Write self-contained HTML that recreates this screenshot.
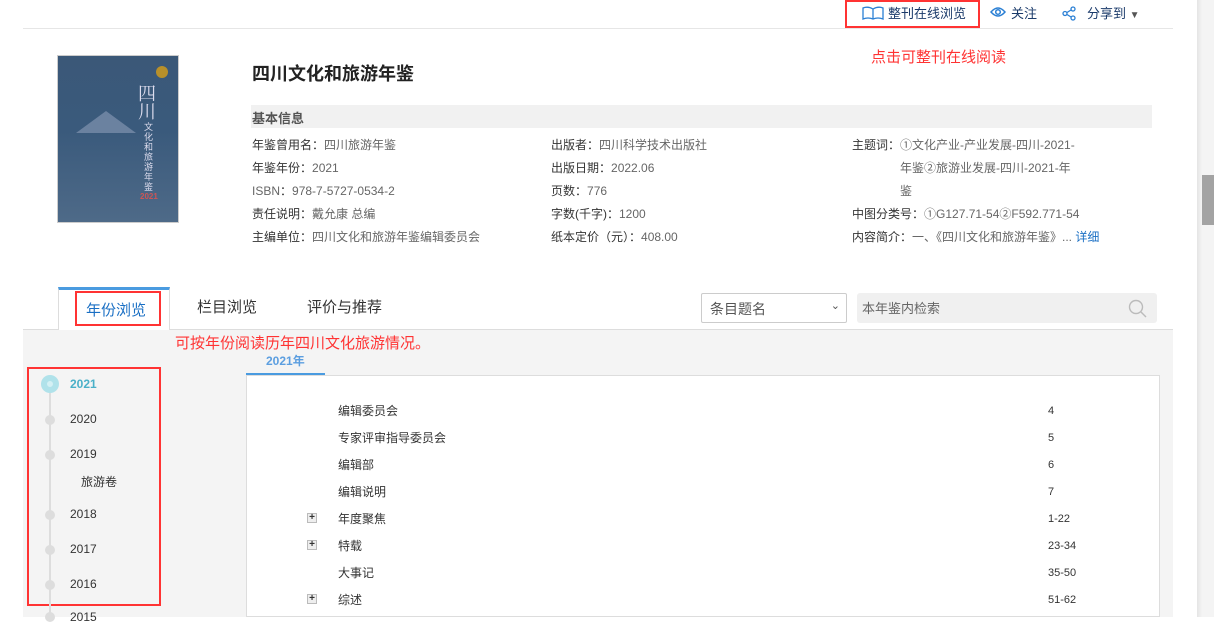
<!DOCTYPE html>
<html><head><meta charset="utf-8"><style>
*{margin:0;padding:0;box-sizing:border-box}
body{width:1214px;height:617px;overflow:hidden;background:#fff;font-family:"Liberation Sans","Noto Sans CJK SC",sans-serif;font-size:12px;color:#333;position:relative}
.a{position:absolute;white-space:nowrap}
.red{color:#f33}
.box{position:absolute;border:2px solid #f33}
.v{color:#666}
</style></head><body>
<div class="a" style="left:23px;top:28px;width:1150px;height:1px;background:#e6e6e6"></div>
<div class="box" style="left:845px;top:0;width:135px;height:28px"></div>
<svg class="a" style="left:862px;top:6px" width="22" height="14" viewBox="0 0 22 14"><path d="M1 2 Q6 0 11 3 Q16 0 21 2 L21 13 Q16 11 11 13 Q6 11 1 13Z M11 3 V13" fill="none" stroke="#2a7fd4" stroke-width="1.3"/></svg>
<div class="a" style="left:888px;top:3px;font-size:13px;color:#1a3a6a">整刊在线浏览</div>
<svg class="a" style="left:990px;top:5px" width="16" height="14" viewBox="0 0 16 14"><path d="M1 7 Q8 -1 15 7 Q8 15 1 7Z" fill="none" stroke="#2a7fd4" stroke-width="1.5"/><circle cx="8" cy="7" r="2.3" fill="none" stroke="#2a7fd4" stroke-width="1.5"/></svg>
<div class="a" style="left:1011px;top:3px;font-size:13px;color:#1a3a6a">关注</div>
<svg class="a" style="left:1062px;top:6px" width="14" height="15" viewBox="0 0 14 15"><circle cx="11" cy="3" r="2" fill="none" stroke="#2a7fd4" stroke-width="1.3"/><circle cx="3" cy="7.5" r="2" fill="none" stroke="#2a7fd4" stroke-width="1.3"/><circle cx="11" cy="12" r="2" fill="none" stroke="#2a7fd4" stroke-width="1.3"/><path d="M5 6.5 L9 4 M5 8.5 L9 11" stroke="#2a7fd4" stroke-width="1.3"/></svg>
<div class="a" style="left:1087px;top:3px;font-size:13px;color:#1a3a6a">分享到 <span style="font-size:10px;color:#555">▼</span></div>
<div class="a red" style="left:871px;top:46px;font-size:15px">点击可整刊在线阅读</div>
<div class="a" style="left:57px;top:55px;width:122px;height:168px;border:1px solid #ccc;background:linear-gradient(180deg,#3b5878 0%,#3a5a7c 45%,#4e6a88 100%)">
<div class="a" style="left:98px;top:10px;width:12px;height:12px;border-radius:50%;background:#b8902a"></div>
<div class="a" style="left:18px;top:55px;width:0;height:0;border-left:30px solid transparent;border-right:30px solid transparent;border-bottom:22px solid #6b82a0"></div>
<div class="a" style="left:80px;top:28px;color:#dde;font-size:18px;font-family:'Noto Serif CJK SC',serif;line-height:18px">四<br>川</div>
<div class="a" style="left:86px;top:66px;color:#dde;font-size:9px;line-height:10px;width:10px;white-space:normal">文化和旅游年鉴</div>
<div class="a" style="left:82px;top:136px;color:#c55;font-size:8px;font-weight:bold">2021</div>
</div>
<div class="a" style="left:252px;top:60px;font-size:18px;font-weight:bold;color:#222">四川文化和旅游年鉴</div>
<div class="a" style="left:251px;top:105px;width:901px;height:23px;background:#f1f1f1"></div>
<div class="a" style="left:252px;top:108px;font-size:13px;font-weight:bold;color:#555">基本信息</div>
<div class="a" style="left:252px;top:134px;line-height:23px">年鉴曾用名：<span class="v">四川旅游年鉴</span><br>年鉴年份：<span class="v">2021</span><br><span class="v">ISBN</span>：<span class="v">978-7-5727-0534-2</span><br>责任说明：<span class="v">戴允康 总编</span><br>主编单位：<span class="v">四川文化和旅游年鉴编辑委员会</span></div>
<div class="a" style="left:551px;top:134px;line-height:23px">出版者：<span class="v">四川科学技术出版社</span><br>出版日期：<span class="v">2022.06</span><br>页数：<span class="v">776</span><br>字数(千字)：<span class="v">1200</span><br>纸本定价（元）：<span class="v">408.00</span></div>
<div class="a" style="left:852px;top:134px;line-height:23px">主题词：<span class="v">①文化产业-产业发展-四川-2021-</span><br><span class="v" style="padding-left:48px">年鉴②旅游业发展-四川-2021-年</span><br><span class="v" style="padding-left:48px">鉴</span><br>中图分类号：<span class="v">①G127.71-54②F592.771-54</span><br>内容简介：<span class="v">一、《四川文化和旅游年鉴》...</span> <span style="color:#1a6fc4">详细</span></div>
<div class="a" style="left:23px;top:329px;width:1150px;height:288px;background:#f4f4f4;border-top:1px solid #ddd"></div>
<div class="a" style="left:58px;top:287px;width:112px;height:43px;background:#fff;border:1px solid #ddd;border-bottom:none;border-top:3px solid #4a9be0"></div>
<div class="box" style="left:75px;top:291px;width:86px;height:35px"></div>
<div class="a" style="left:86px;top:299px;font-size:15px;color:#1a6fc4">年份浏览</div>
<div class="a" style="left:197px;top:296px;font-size:15px;color:#333">栏目浏览</div>
<div class="a" style="left:307px;top:296px;font-size:15px;color:#333">评价与推荐</div>
<div class="a" style="left:701px;top:293px;width:146px;height:30px;border:1px solid #ccc;border-radius:2px;background:#fff;font-size:14px;color:#555;padding:5px 0 0 8px">条目题名<span style="position:absolute;right:6px;top:5px;font-size:11px">⌄</span></div>
<div class="a" style="left:857px;top:293px;width:300px;height:30px;background:#f0f0f0;border-radius:3px;font-size:13px;color:#666;padding:5px 0 0 5px">本年鉴内检索</div>
<svg class="a" style="left:1128px;top:299px" width="20" height="20" viewBox="0 0 20 20"><circle cx="8" cy="8" r="6.5" fill="none" stroke="#bbb" stroke-width="1.4"/><path d="M13 13 L18 18" stroke="#bbb" stroke-width="1.5"/></svg>
<div class="a red" style="left:175px;top:332px;font-size:15px">可按年份阅读历年四川文化旅游情况。</div>
<div class="a" style="left:266px;top:352px;font-size:12px;font-weight:bold;color:#5b9ee0">2021年</div>
<div class="a" style="left:246px;top:373px;width:79px;height:2px;background:#4a9be0"></div>
<div class="a" style="left:246px;top:375px;width:914px;height:242px;background:#fff;border:1px solid #ddd"></div>
<div class="box" style="left:27px;top:367px;width:134px;height:239px"></div>
<div class="a" style="left:49px;top:390px;width:2px;height:227px;background:#ddd"></div>
<div class="a" style="left:41px;top:375px;width:18px;height:18px;border-radius:50%;background:#b0e2ea"></div>
<div class="a" style="left:45px;top:379px;width:10px;height:10px;border-radius:50%;background:#d4f0f4;border:2px solid #b0e2ea"></div>
<div class="a" style="left:45px;top:415px;width:10px;height:10px;border-radius:50%;background:#ddd"></div>
<div class="a" style="left:45px;top:450px;width:10px;height:10px;border-radius:50%;background:#ddd"></div>
<div class="a" style="left:45px;top:510px;width:10px;height:10px;border-radius:50%;background:#ddd"></div>
<div class="a" style="left:45px;top:545px;width:10px;height:10px;border-radius:50%;background:#ddd"></div>
<div class="a" style="left:45px;top:580px;width:10px;height:10px;border-radius:50%;background:#ddd"></div>
<div class="a" style="left:45px;top:612px;width:10px;height:10px;border-radius:50%;background:#ddd"></div>
<div class="a" style="left:70px;top:377px;font-weight:bold;color:#4ab0c8">2021</div>
<div class="a" style="left:70px;top:412px">2020</div>
<div class="a" style="left:70px;top:447px">2019</div>
<div class="a" style="left:81px;top:473px">旅游卷</div>
<div class="a" style="left:70px;top:507px">2018</div>
<div class="a" style="left:70px;top:542px">2017</div>
<div class="a" style="left:70px;top:577px">2016</div>
<div class="a" style="left:70px;top:610px">2015</div>
<div class="a" style="left:338px;top:398px;line-height:27px">编辑委员会<br>专家评审指导委员会<br>编辑部<br>编辑说明<br>年度聚焦<br>特载<br>大事记<br>综述</div>
<div class="a" style="left:1048px;top:398px;line-height:27px;font-size:11px">4<br>5<br>6<br>7<br>1-22<br>23-34<br>35-50<br>51-62</div>
<div class="a" style="left:307px;top:513px;width:10px;height:10px;border:1px solid #bbb;background:#eee;font-size:10px;line-height:8px;text-align:center;font-weight:bold">+</div>
<div class="a" style="left:307px;top:540px;width:10px;height:10px;border:1px solid #bbb;background:#eee;font-size:10px;line-height:8px;text-align:center;font-weight:bold">+</div>
<div class="a" style="left:307px;top:594px;width:10px;height:10px;border:1px solid #bbb;background:#eee;font-size:10px;line-height:8px;text-align:center;font-weight:bold">+</div>
<div class="a" style="left:1197px;top:0;width:17px;height:617px;background:linear-gradient(90deg,#e4e4e4,#f4f4f4 30%,#f4f4f4)"></div>
<div class="a" style="left:1202px;top:175px;width:12px;height:50px;background:#a3a3a3"></div>
</body></html>
